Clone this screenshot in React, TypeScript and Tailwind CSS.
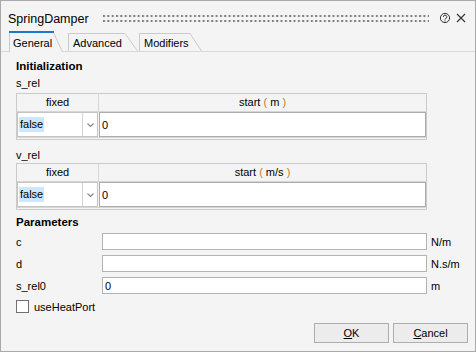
import React from "react";

const Paren = ({ children }: { children: React.ReactNode }) => (
    <span className="text-[#c8791f]">{children}</span>
);

const InitTable = ({ unit, value }: { unit: string; value: string }) => (
    <div className="w-[411px] border border-[#cbcbcb]">
        <div className="flex h-[18px] border-b border-[#d6d6d6]">
            <div className="w-[82px] border-r border-[#d6d6d6] text-center leading-[17px]">
                fixed
            </div>
            <div className="flex-1 text-center leading-[17px]">
                start <Paren>(</Paren> {unit} <Paren>)</Paren>
            </div>
        </div>
        <div className="flex h-[25px]">
            <div className="flex w-[81px] border border-[#c4c4c4] bg-white">
                <div className="flex flex-1 items-center">
                    <span className="ml-[1px] bg-[#cce8ff] px-[1px] leading-[15px]">
                        false
                    </span>
                </div>
                <div className="flex w-[15px] items-center justify-center border-l border-[#d4d4d4]">
                    <svg width="7" height="4" viewBox="0 0 7 4">
                        <path
                            d="M0.5 0.5 L3.5 3.5 L6.5 0.5"
                            fill="none"
                            stroke="#8c8c8c"
                            strokeWidth="1.2"
                        />
                    </svg>
                </div>
            </div>
            <div className="ml-[1px] flex flex-1 items-center border border-[#acacac] bg-white pl-[2px]">
                {value}
            </div>
        </div>
        <div className="h-[2px] border-t border-[#d6d6d6]" />
    </div>
);

const ParamRow = ({
    label,
    unit,
    value,
    className,
}: {
    label: string;
    unit: string;
    value?: string;
    className: string;
}) => (
    <div className={`flex h-[17px] items-center ${className}`}>
        <div className="w-[86px]">{label}</div>
        <div className="flex h-[17px] w-[325px] items-center border border-[#b3b3b3] bg-white pl-[2px]">
            {value}
        </div>
        <div className="ml-[4px]">{unit}</div>
    </div>
);

const Tab = ({
    label,
    width,
    slant,
    active,
    className,
}: {
    label: string;
    width: number;
    slant: number;
    active?: boolean;
    className: string;
}) => {
    const h = active ? 21 : 18;
    return (
        <div className={`relative ${className}`} style={{ width, height: h }}>
            <svg width={width} height={h} className="absolute inset-0">
                <path
                    d={`M0.5 ${h} V0.5 H${slant} L${width - 0.5} ${h}`}
                    fill="#f4f4f4"
                    stroke="#cacaca"
                />
                {active && <rect x="0" y="0" width={slant + 1} height="2" fill="#1979ca" />}
            </svg>
            <div
                className={`relative leading-4 ${active ? "pl-[4px] pt-[4px]" : "pl-[5px] pt-[2px]"}`}
            >
                {label}
            </div>
        </div>
    );
};

export default function App() {
    return (
        <div className="flex h-[352px] w-[476px] flex-col border border-[#a9a9a9] bg-[#f4f4f4] font-['Liberation_Sans',Arial,sans-serif] text-[11px] leading-4 text-black">
            {/* title bar */}
            <div className="flex h-[30px] items-start pl-[7px] pt-[10px]">
                <div className="w-[95px] text-[12.5px] leading-4">SpringDamper</div>
                <svg width="326" height="7" className="mt-[4px] shrink-0">
                    <defs>
                        <pattern id="grip" width="4.33" height="5" patternUnits="userSpaceOnUse">
                            <rect width="2" height="2" fill="#7e7e7e" />
                        </pattern>
                    </defs>
                    <rect width="326" height="7" fill="url(#grip)" />
                </svg>
                <svg width="12" height="12" viewBox="0 0 12 12" className="ml-[10px] mt-[1px] shrink-0">
                    <circle cx="6" cy="6" r="4.6" fill="none" stroke="#333" strokeWidth="1" />
                    <path
                        d="M4.4 4.9 A1.7 1.7 0 1 1 6.5 6.5 C6.1 6.7 6 7 6 7.5"
                        fill="none"
                        stroke="#333"
                        strokeWidth="1"
                    />
                    <circle cx="6" cy="8.8" r="0.6" fill="#333" />
                </svg>
                <svg width="10" height="10" viewBox="0 0 10 10" className="ml-[5px] mt-[2px] shrink-0">
                    <path d="M1 1 L9 9 M9 1 L1 9" stroke="#333" strokeWidth="1.1" />
                </svg>
            </div>

            {/* tabs */}
            <div className="flex h-[21px] items-end border-b border-[#d9d9d9] pl-[8px]">
                <Tab label="General" width={54} slant={44} active className="z-10 mb-[-1px]" />
                <Tab label="Advanced" width={70} slant={57} className="ml-[5px]" />
                <Tab label="Modifiers" width={63} slant={51} className="ml-[1px]" />
            </div>

            {/* general page */}
            <div className="flex flex-1 flex-col pl-[15px]">
                <div className="mt-[6px] text-[11.5px] font-bold">Initialization</div>
                <div className="mt-[1px]">s_rel</div>
                <div className="mt-[2px]">
                    <InitTable unit="m" value="0" />
                </div>
                <div className="mt-[7px]">v_rel</div>
                <InitTable unit="m/s" value="0" />

                <div className="mt-[4px] text-[11.5px] font-bold">Parameters</div>
                <ParamRow label="c" unit="N/m" className="mt-[3px]" />
                <ParamRow label="d" unit="N.s/m" className="mt-[5px]" />
                <ParamRow label="s_rel0" unit="m" value="0" className="mt-[5px]" />

                <div className="mt-[6px] flex h-[13px] items-center">
                    <div className="h-[13px] w-[13px] border border-[#707070] bg-white" />
                    <div className="ml-[5px]">useHeatPort</div>
                </div>

                <div className="mt-[10px] flex justify-end gap-[4px] pr-[7px]">
                    <button className="h-[20px] w-[75px] border border-[#adadad] bg-[#ececec]">
                        <span className="underline">O</span>K
                    </button>
                    <button className="h-[20px] w-[75px] border border-[#adadad] bg-[#ececec]">
                        <span className="underline">C</span>ancel
                    </button>
                </div>
            </div>
        </div>
    );
}
